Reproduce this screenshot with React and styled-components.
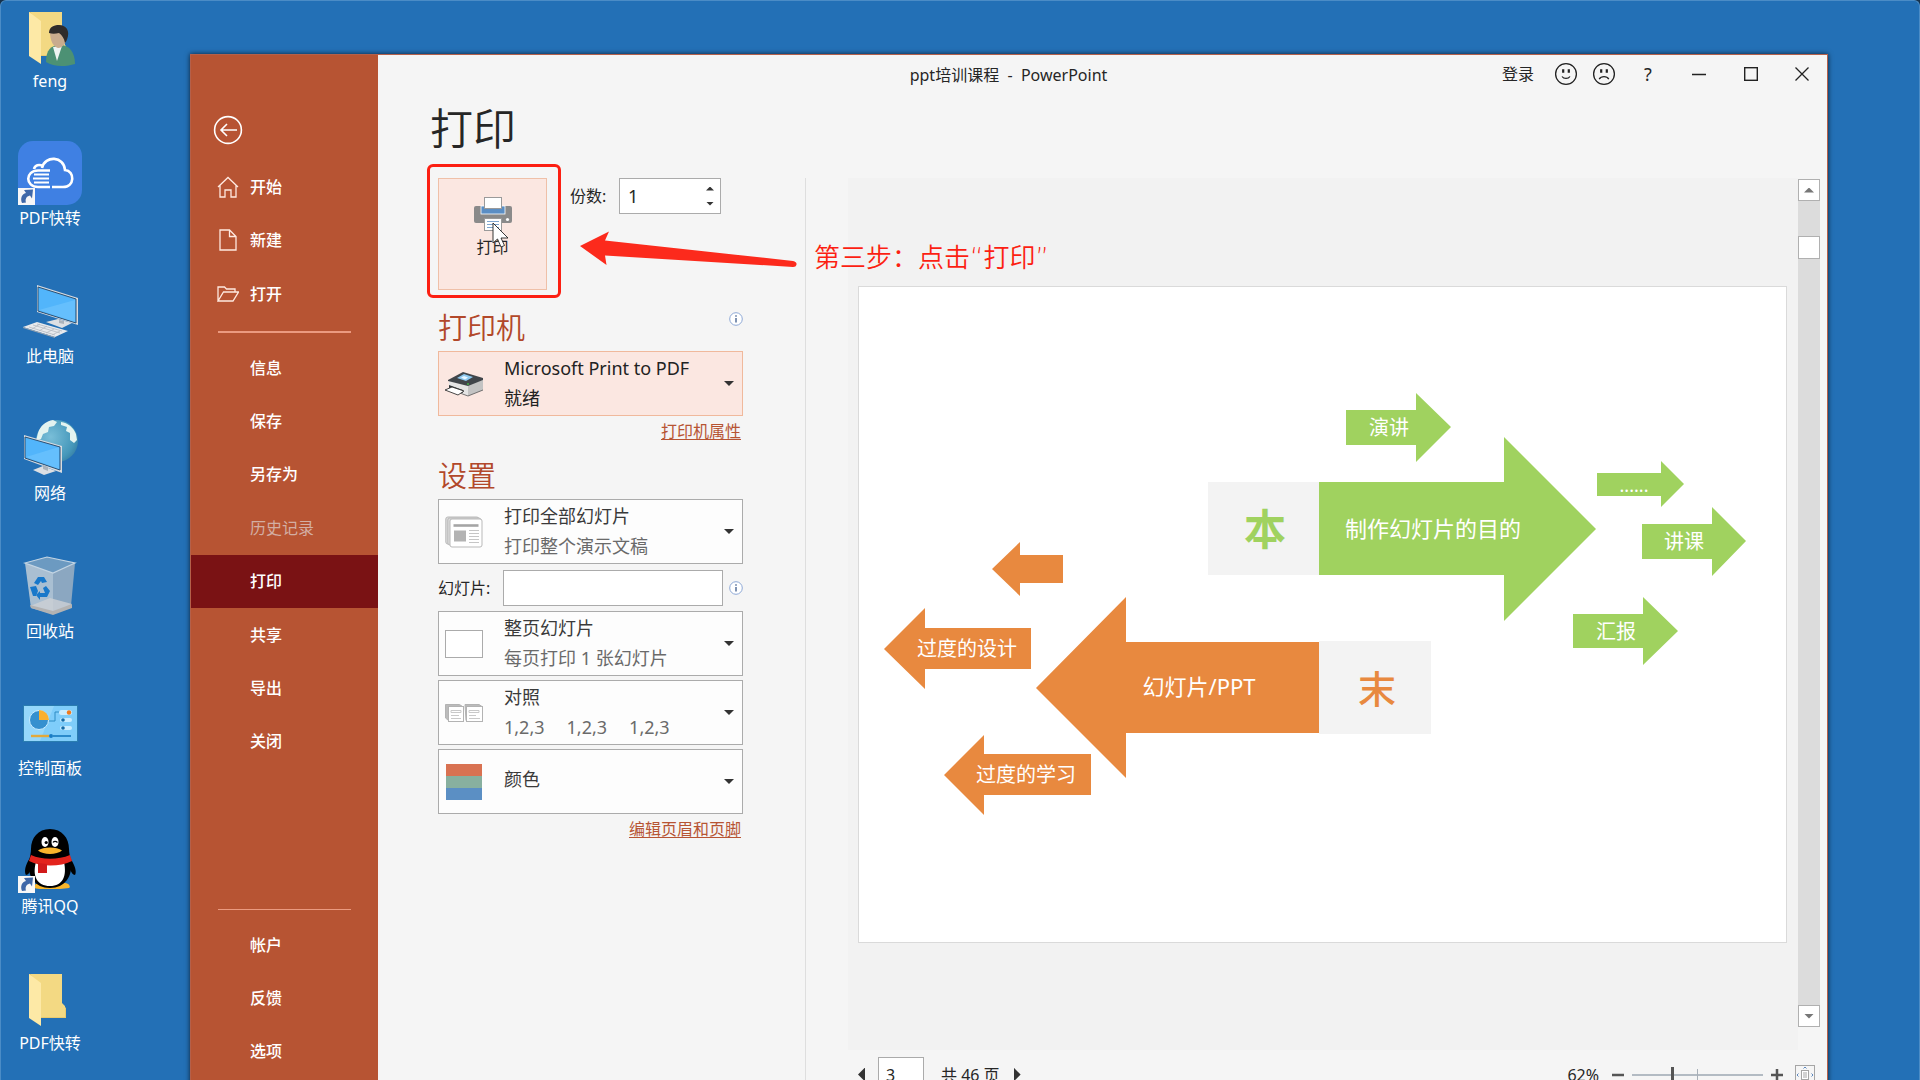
import { useState } from "react";
import styled, { createGlobalStyle } from "styled-components";

const DESKTOP_ITEMS = [
   { id: "feng", label: "feng", Icon: UserFolderIcon },
   { id: "pdf", label: "PDF快转", Icon: PdfAppIcon },
   { id: "pc", label: "此电脑", Icon: ComputerIcon },
   { id: "network", label: "网络", Icon: NetworkIcon },
   { id: "bin", label: "回收站", Icon: RecycleBinIcon },
   { id: "control", label: "控制面板", Icon: ControlPanelIcon },
   { id: "qq", label: "腾讯QQ", Icon: PenguinIcon },
   { id: "pdf-folder", label: "PDF快转", Icon: FolderIcon },
];

const TOP_MENU = [
   { label: "开始", Icon: HomeIcon },
   { label: "新建", Icon: NewFileIcon },
   { label: "打开", Icon: OpenFolderIcon },
];

const FILE_MENU = ["信息", "保存", "另存为", "历史记录", "打印", "共享", "导出", "关闭"];
const BOTTOM_MENU = ["帐户", "反馈", "选项"];

const GREEN = "#a0d25f";
const ORANGE = "#e8893f";

// points are in slide pixels, 929 x 657
const SLIDE_ARROWS = [
   { color: GREEN, points: "488,124 558,124 558,107 593,141 558,176 558,159 488,159", text: "演讲", x: 531, y: 149, size: 20 },
   { color: GREEN, points: "461,196 646,196 646,151 738,243 646,335 646,289 461,289", text: "制作幻灯片的目的", x: 575, y: 251, size: 22 },
   { color: GREEN, points: "739,187 803,187 803,175 826,198 803,221 803,210 739,210", text: "......", x: 776, y: 206, size: 18 },
   { color: GREEN, points: "784,238 854,238 854,221 888,255 854,290 854,273 784,273", text: "讲课", x: 826, y: 263, size: 20 },
   { color: GREEN, points: "715,328 785,328 785,311 820,345 785,379 785,362 715,362", text: "汇报", x: 758, y: 353, size: 20 },
   { color: ORANGE, points: "205,269 162,269 162,256 134,283 162,310 162,297 205,297" },
   { color: ORANGE, points: "173,342 67,342 67,322 26,363 67,403 67,383 173,383", text: "过度的设计", x: 109, y: 370, size: 20 },
   { color: ORANGE, points: "461,356 268,356 268,311 178,402 268,492 268,447 461,447", text: "幻灯片/PPT", x: 341, y: 409, size: 22 },
   { color: ORANGE, points: "233,468 126,468 126,449 86,489 126,529 126,509 233,509", text: "过度的学习", x: 168, y: 496, size: 20 },
];

const App = () => {
   return (
      <>
         <GlobalStyle />
         <Desktop>
            <DesktopIconList>
               {DESKTOP_ITEMS.map(({ id, label, Icon }) => (
                  <li key={id}>
                     <DesktopShortcut>
                        <Icon />
                        <span>{label}</span>
                     </DesktopShortcut>
                  </li>
               ))}
            </DesktopIconList>
            <AppWindow>
               <Sidebar />
               <Backstage>
                  <TitleBar>
                     <WindowTitle>ppt培训课程&nbsp; -&nbsp; PowerPoint</WindowTitle>
                     <WindowControls />
                  </TitleBar>
                  <PageTitle>打印</PageTitle>
                  <BackstageBody>
                     <PrintSettings />
                     <PrintPreview />
                  </BackstageBody>
               </Backstage>
            </AppWindow>
         </Desktop>
      </>
   );
};

const Sidebar = () => {
   return (
      <SidebarWrapper>
         <BackButton aria-label="返回">
            <svg width="30" height="30" viewBox="0 0 30 30" fill="none" stroke="#fff" strokeWidth="1.6">
               <circle cx="15" cy="15" r="13.4" />
               <path d="M24 15H8M14 9l-6 6 6 6" />
            </svg>
         </BackButton>
         <MenuGroup $height={161}>
            {TOP_MENU.map(({ label, Icon }) => (
               <MenuItem key={label}>
                  <Icon />
                  {label}
               </MenuItem>
            ))}
         </MenuGroup>
         <MenuDivider $thickness={2} />
         <MenuGroup $height={427}>
            {FILE_MENU.map((label) => (
               <MenuItem key={label} $indent $active={label === "打印"} disabled={label === "历史记录"}>
                  {label}
               </MenuItem>
            ))}
         </MenuGroup>
         <MenuSpacer />
         <MenuDivider $thickness={1} />
         <MenuGroup $height={160}>
            {BOTTOM_MENU.map((label) => (
               <MenuItem key={label} $indent>{label}</MenuItem>
            ))}
         </MenuGroup>
      </SidebarWrapper>
   );
};

const WindowControls = () => {
   return (
      <ControlList>
         <LoginButton>登录</LoginButton>
         <ControlButton $width={38} aria-label="微笑">
            <svg width="24" height="24" viewBox="0 0 24 24" fill="none" stroke="#222" strokeWidth="1.3">
               <circle cx="12" cy="12" r="10.4" />
               <path d="M8 14.5c1.8 2.6 6.2 2.6 8 0" />
               <path d="M9.2 7.2v3.6M14.8 7.2v3.6" strokeWidth="2.2" />
            </svg>
         </ControlButton>
         <ControlButton $width={38} aria-label="难过">
            <svg width="24" height="24" viewBox="0 0 24 24" fill="none" stroke="#222" strokeWidth="1.3">
               <circle cx="12" cy="12" r="10.4" />
               <path d="M7.2 17.2c2-3.4 7.6-3.4 9.6 0" />
               <path d="M9.2 7.2v3.6M14.8 7.2v3.6" strokeWidth="2.2" />
            </svg>
         </ControlButton>
         <ControlButton $width={50}>?</ControlButton>
         <ControlButton $width={52} aria-label="最小化">
            <svg width="14" height="14" viewBox="0 0 14 14" stroke="#222" strokeWidth="1.5">
               <path d="M0 7.5h14" />
            </svg>
         </ControlButton>
         <ControlButton $width={52} aria-label="最大化">
            <svg width="14" height="14" viewBox="0 0 14 14" fill="none" stroke="#222" strokeWidth="1.4">
               <rect x=".7" y=".7" width="12.6" height="12.6" />
            </svg>
         </ControlButton>
         <ControlButton $width={50} aria-label="关闭窗口">
            <svg width="14" height="14" viewBox="0 0 14 14" stroke="#222" strokeWidth="1.3">
               <path d="M.5.5l13 13M13.5.5l-13 13" />
            </svg>
         </ControlButton>
      </ControlList>
   );
};

const PrintSettings = () => {
   const [copies, setCopies] = useState(1);

   return (
      <SettingsColumn>
         <PrintRow>
            <PrintButtonWrapper>
               <PrintButton>
                  <PrinterGlyph />
                  打印
               </PrintButton>
               <Highlight />
               <CursorIcon />
            </PrintButtonWrapper>
            <CopiesField>
               <label htmlFor="copies">份数:</label>
               <CopiesBox>
                  <input
                     id="copies"
                     type="number"
                     value={copies}
                     onChange={(e) => setCopies(Number(e.target.value))}
                  />
                  <SpinButtons>
                     <button aria-label="增加" onClick={() => setCopies(copies + 1)}>
                        <Triangle $dir="up" $size={4} />
                     </button>
                     <button aria-label="减少" onClick={() => setCopies(Math.max(1, copies - 1))}>
                        <Triangle $dir="down" $size={4} />
                     </button>
                  </SpinButtons>
               </CopiesBox>
            </CopiesField>
            <StepNote>
               <svg width="218" height="36" viewBox="0 0 218 36" fill="#fc2a1c">
                  <path d="M0 15L29 0.5L25 9.5L213 30Q217 31 216.500 33.500Q216 36 213 36L25 24.500L26.500 34Z" />
               </svg>
               <span>第三步：点击“打印”</span>
            </StepNote>
         </PrintRow>

         <SectionHead>
            <h2>打印机</h2>
            <InfoIcon />
         </SectionHead>
         <OptionSelect
            highlighted
            name="选择打印机"
            title="Microsoft Print to PDF"
            detail="就绪"
            icon={<PrinterPhotoIcon />}
         />
         <SettingsLink href="#printer">打印机属性</SettingsLink>

         <SectionHead>
            <h2>设置</h2>
         </SectionHead>
         <OptionSelect name="打印范围" title="打印全部幻灯片" detail="打印整个演示文稿" icon={<SlidesStackIcon />} />
         <SlidesField>
            <label htmlFor="slides">幻灯片:</label>
            <input id="slides" type="text" />
            <InfoIcon />
         </SlidesField>
         <OptionStack>
            <OptionSelect name="版式" title="整页幻灯片" detail="每页打印 1 张幻灯片" icon={<FullPageIcon />} />
            <OptionSelect
               name="顺序"
               title="对照"
               detail={<><i>1,2,3</i><i>1,2,3</i><i>1,2,3</i></>}
               icon={<CollateIcon />}
            />
            <OptionSelect name="颜色模式" title="颜色" icon={<ColorIcon />} />
         </OptionStack>
         <SettingsLink href="#header-footer">编辑页眉和页脚</SettingsLink>
      </SettingsColumn>
   );
};

const OptionSelect = ({ name, title, detail, icon, highlighted = false }) => {
   return (
      <OptionBox $highlighted={highlighted}>
         <OptionIcon>{icon}</OptionIcon>
         <OptionText $highlighted={highlighted} $single={!detail}>
            <strong>{title}</strong>
            {detail && <span>{detail}</span>}
         </OptionText>
         <Triangle $dir="down" $size={5} />
         <select aria-label={name} defaultValue={title}>
            <option>{title}</option>
         </select>
      </OptionBox>
   );
};

const PrintPreview = () => {
   return (
      <PreviewColumn>
         <PreviewMain>
            <PreviewStage>
               <Slide />
            </PreviewStage>
            <ScrollBar>
               <button aria-label="向上滚动"><Triangle $dir="up" $size={5} $color="#777" /></button>
               <ScrollThumb />
               <ScrollTrack />
               <button aria-label="向下滚动"><Triangle $dir="down" $size={5} $color="#777" /></button>
            </ScrollBar>
         </PreviewMain>
         <PreviewFooter>
            <Pager>
               <button aria-label="上一页"><Triangle $dir="left" $size={7} /></button>
               <input type="text" aria-label="当前页" defaultValue="3" />
               <span>共 46 页</span>
               <button aria-label="下一页"><Triangle $dir="right" $size={7} /></button>
            </Pager>
            <Zoomer>
               <label htmlFor="zoom">62%</label>
               <button aria-label="缩小">
                  <svg width="12" height="12" viewBox="0 0 12 12" stroke="#555" strokeWidth="2.5"><path d="M0 6h12" /></svg>
               </button>
               <ZoomSlider>
                  <input id="zoom" type="range" min="10" max="180" defaultValue="62" />
               </ZoomSlider>
               <button aria-label="放大">
                  <svg width="12" height="12" viewBox="0 0 12 12" stroke="#555" strokeWidth="2.5"><path d="M0 6h12M6 0v12" /></svg>
               </button>
               <button aria-label="缩放到页面">
                  <svg width="20" height="20" viewBox="0 0 20 20" fill="none" stroke="#a5a5a5">
                     <rect x=".5" y=".5" width="19" height="19" />
                     <rect x="6.500" y="5.500" width="7" height="9" fill="#fff" />
                     <path d="M8 8h4M8 10h4M8 12h4" />
                     <path d="M8.500 3.500L10 2l1.500 1.500M8.500 16.500L10 18l1.500-1.500M3.500 8.500L2 10l1.500 1.500M16.500 8.500L18 10l-1.500 1.500" stroke="#5b87bd" />
                  </svg>
               </button>
            </Zoomer>
         </PreviewFooter>
      </PreviewColumn>
   );
};

const Slide = () => {
   return (
      <SlidePaper viewBox="0 0 929 657">
         <rect width="929" height="657" fill="#fff" />
         <rect x="350" y="196" width="111" height="93" fill="#f3f3f3" />
         <rect x="461" y="355" width="112" height="93" fill="#f3f3f3" />
         {SLIDE_ARROWS.map(({ color, points, text, x, y, size }) => (
            <g key={points}>
               <polygon points={points} fill={color} />
               {text && <text x={x} y={y} fontSize={size} fill="#fff">{text}</text>}
            </g>
         ))}
         <text x="407" y="259" fontSize="42" fontWeight="700" fill={GREEN}>本</text>
         <text x="519" y="417" fontSize="38" fontWeight="500" fill={ORANGE}>末</text>
         <rect x=".5" y=".5" width="928" height="656" fill="none" stroke="#dadada" />
      </SlidePaper>
   );
};

/* desktop icons */

function FolderShape() {
   return (
      <>
         <path d="M11 8h33v30l4 4v10H11z" fill="#e9ca6e" />
         <path d="M13 8h31v29l3 3v11H22z" fill="#f3d983" />
         <path d="M11 8l12 9v43L11 52z" fill="#fde9a6" />
      </>
   );
}

function FolderIcon() {
   return (
      <svg width="64" height="64" viewBox="0 0 64 64">
         <FolderShape />
      </svg>
   );
}

function UserFolderIcon() {
   return (
      <svg width="64" height="64" viewBox="0 0 64 64">
         <FolderShape />
         <path d="M28 58c0-12 5-17 14-17 10 0 15 8 15 19-9 3-22 3-29-2z" fill="#4c9174" />
         <path d="M35 43l4 14 5-15z" fill="#eef4f2" />
         <path d="M32 28c0-5 4-7 8-7 6 0 9 4 9 10 0 7-4 13-9 13-5-1-8-8-8-16z" fill="#c9ac8e" />
         <path d="M31 29c0-6 5-8 10-8 7 0 10 5 9 11-1 4-2 6-3 7-1-5-3-8-6-10-4 1-7 1-10 0z" fill="#2f2c2b" />
      </svg>
   );
}

function ShortcutBadge() {
   return (
      <>
         <rect x="0" y="47" width="17" height="17" fill="#f7f7f7" />
         <path d="M4 62c-2-5 0-9 4-10l-2-3 9-.5-1 9-2-3c-4 1-5 4-4 7z" fill="#3f68a8" />
      </>
   );
}

function PdfAppIcon() {
   return (
      <svg width="64" height="64" viewBox="0 0 64 64">
         <rect width="64" height="64" rx="15" fill="#3f80e3" />
         <g fill="none" stroke="#fff" strokeWidth="2.6">
            <path d="M32 29.500H20C7 29.500 7 46 20 46h12" />
            <path d="M34 46h11c12 0 12-16 2-17-1-14-20-15-23-2" />
            <path d="M16 28c1-4 5-5 9-3" />
            <path d="M16 33.500h15M15 37.500h16M16 41.500h15" strokeWidth="1.8" />
         </g>
         <ShortcutBadge />
      </svg>
   );
}

function ComputerIcon() {
   return (
      <svg width="64" height="64" viewBox="0 0 64 64">
         <path d="M19 6l41 13v27L19 33z" fill="#d7dbe0" />
         <path d="M20 8l38 12v24L20 32z" fill="#52b5fb" stroke="#2b4f72" strokeWidth="1" />
         <path d="M21 31l36-10v22z" fill="#7ccbff" opacity=".45" />
         <path d="M28 43l12-3 14 4-10 5z" fill="#dcdfe3" />
         <path d="M41 41l5 1v3l-5-1z" fill="#aab2bb" />
         <path d="M5 48l14-5 31 9-13 6z" fill="#e8eaed" />
         <path d="M5 48l32 10v1L5 49z" fill="#9aa4af" />
         <path d="M11 48l26 8M15 46l27 8M19 45l25 7M14 50l8-5M21 52l8-5M28 54l8-4M34 56l8-4" stroke="#b4bac1" strokeWidth=".8" />
      </svg>
   );
}

function NetworkIcon() {
   return (
      <svg width="64" height="64" viewBox="0 0 64 64">
         <defs>
            <radialGradient id="globe" cx=".35" cy=".4" r=".8">
               <stop offset="0" stopColor="#79bed8" />
               <stop offset=".7" stopColor="#4597ba" />
               <stop offset="1" stopColor="#2f7298" />
            </radialGradient>
         </defs>
         <circle cx="39" cy="25" r="21" fill="url(#globe)" />
         <path d="M20 17c2-7 8-12 15-13l4 2-3 4-5 1-1 5-5 2-2 5-5 2zM43 6c7 1 12 5 15 12l1 6-3 3-4-3v-7l-4-2 1-4-6-2z" fill="#e3f3f0" />
         <path d="M6 19l38 11v27L6 43z" fill="#d7dbe0" />
         <path d="M7 21l35 10v23L7 42z" fill="#52b5fb" stroke="#2b4f72" strokeWidth="1" />
         <path d="M8 41l33-10v22z" fill="#7ccbff" opacity=".45" />
         <path d="M15 54l10-4 13 5-12 4z" fill="#dcdfe3" />
         <path d="M25 49l5 2v4l-5-2z" fill="#aab2bb" />
      </svg>
   );
}

function RecycleBinIcon() {
   return (
      <svg width="64" height="64" viewBox="0 2 64 64">
         <path d="M7 11l28 6v45l-22-6z" fill="#a9bfd2" />
         <path d="M57 11l-22 6v45l18-8z" fill="#8ba7c1" />
         <path d="M7 11l22-6 28 6-22 10z" fill="#6c9ac1" stroke="#c3d5e4" strokeWidth="1.200" />
         <path d="M12 54l20-8 22 6-19 10z" fill="#cdd1d4" opacity=".8" />
         <path d="M12 53l23 6 19-7v4l-19 7-22-7z" fill="#b3b3b3" />
         <g fill="#1878ca">
            <path d="M16 31l4-6h6l3 5-5 1-1-2-3 4z" />
            <path d="M12 35l6-1 2 5-2 5h-3z" />
            <path d="M28 34l4 5-3 6h-7v3l-4-5 4-4v2h5l-2-5z" />
         </g>
      </svg>
   );
}

function ControlPanelIcon() {
   return (
      <svg width="64" height="64" viewBox="0 1 64 64">
         <rect x="5.500" y="15.500" width="54" height="36" fill="#7fcdfa" stroke="#2a7db0" />
         <path d="M6 16h30L22 51H6z" fill="#a3ddfc" opacity=".6" />
         <circle cx="21" cy="30" r="9.500" fill="#3590cf" stroke="#c9ecff" strokeWidth="1" />
         <path d="M21 30V20a10 10 0 0 1 10 10z" fill="#fbb030" />
         <path d="M31 31h6v-9h6" fill="none" stroke="#2f8cc4" />
         <rect x="41" y="20" width="13" height="5" rx="2.500" fill="#c9ecff" />
         <circle cx="51" cy="22.500" r="2.200" fill="#ef7a1f" />
         <rect x="42" y="28" width="12" height="4" rx="2" fill="#c9ecff" />
         <circle cx="45" cy="30" r="1.800" fill="#146ba8" />
         <rect x="42" y="36" width="12" height="4" rx="2" fill="#c9ecff" />
         <circle cx="45" cy="38" r="1.800" fill="#146ba8" />
         <path d="M13 46h18" stroke="#e2a93c" strokeWidth="2.400" />
         <path d="M35 46h18" stroke="#2a8acb" strokeWidth="2" />
         <circle cx="33" cy="46" r="2" fill="#1a7cc4" />
      </svg>
   );
}

function PenguinIcon() {
   return (
      <svg width="64" height="64" viewBox="0 0 64 64">
         <g transform="translate(0 -3)">
            <path d="M18 58c-3 2-3 5 4 5h10c6 0 14 0 19-1 2-1 0-5-4-5z" fill="#f7b52b" />
            <path d="M12 32c-5 7-6 14-4 17 2 0 4-3 5-6zM52 32c5 7 7 14 5 17-2 0-4-3-5-6z" fill="#000" />
            <path d="M32 3c12 0 19 9 19 20 0 4 1 7 2 12 2 15-6 27-21 27S9 50 11 35c1-5 2-8 2-12C13 12 20 3 32 3z" fill="#000" />
            <path d="M18 36c8 3 20 3 28 0 3 14-1 24-14 24S14 50 18 36z" fill="#fff" />
            <path d="M13 29c11 5 27 5 39 0l2 6c-12 6-31 6-43 0z" fill="#e3231c" />
            <path d="M20 37l9 1v9h-9z" fill="#d11a1a" />
            <ellipse cx="27" cy="16" rx="3.500" ry="5" fill="#fff" />
            <ellipse cx="37" cy="16" rx="3.500" ry="5" fill="#fff" />
            <circle cx="28.200" cy="16.500" r="1.600" fill="#000" />
            <path d="M35 16.500c1-1.600 3-1.600 4.500 0" fill="none" stroke="#000" strokeWidth="1.200" />
            <path d="M20 24.500c5-4 19-4 24 0-5 4.500-19 4.500-24 0z" fill="#f9b32c" />
         </g>
         <ShortcutBadge />
      </svg>
   );
}

/* sidebar icons */

function HomeIcon() {
   return (
      <svg width="22" height="22" viewBox="0 0 22 22" fill="none" stroke="#ffe9e0" strokeWidth="1.300">
         <path d="M1 11L11 1.500 21 11M3 9.500V21h5v-7h6v7h5V9.500" />
      </svg>
   );
}

function NewFileIcon() {
   return (
      <svg width="22" height="22" viewBox="0 0 22 22" fill="none" stroke="#ffe9e0" strokeWidth="1.300">
         <path d="M3 1h9.500L19 7.500V21H3zM12.500 1v6.500H19" />
      </svg>
   );
}

function OpenFolderIcon() {
   return (
      <svg width="22" height="22" viewBox="0 0 22 22" fill="none" stroke="#ffe9e0" strokeWidth="1.300">
         <path d="M1 18V4h6.500l2 2H18v3M1 18l5.500-9H21.500L16 18z" />
      </svg>
   );
}

/* print page icons */

function PrinterGlyph() {
   return (
      <svg width="38" height="34" viewBox="0 0 38 34">
         <rect x="0" y="9" width="38" height="17" rx="2" fill="#8a8a8a" />
         <rect x="7" y="9" width="24" height="8" fill="#5b8ec4" stroke="#fff" strokeWidth=".8" />
         <rect x="10.500" y=".5" width="17" height="11" fill="#fff" stroke="#9a9a9a" />
         <circle cx="33.500" cy="22.500" r="1.600" fill="#fff" />
         <rect x="10.500" y="21.500" width="17" height="12" fill="#fff" stroke="#9a9a9a" />
         <path d="M13 24.500h12M13 27.500h12M13 30.500h12" stroke="#7fa5cf" />
      </svg>
   );
}

function CursorIcon() {
   return (
      <CursorSvg width="18" height="26" viewBox="0 0 18 26">
         <path d="M1 1v20l4.500-4 3.500 8 3.500-1.500-3.500-7.500h7z" fill="#fff" stroke="#222" strokeWidth=".9" />
      </CursorSvg>
   );
}

function InfoIcon() {
   return (
      <svg width="14" height="14" viewBox="0 0 14 14" fill="none">
         <circle cx="7" cy="7" r="6.300" fill="#fff" stroke="#8ea9d6" />
         <path d="M7 6v4.500M7 3.300v1.500" stroke="#56709b" strokeWidth="1.500" />
      </svg>
   );
}

function PrinterPhotoIcon() {
   return (
      <svg width="38" height="26" viewBox="0 0 38 26">
         <path d="M4 10v8l19 7 15-6V9L22 14z" fill="#e4e4e4" />
         <path d="M23 14l15-5v10l-15 6z" fill="#c3c3c3" />
         <path d="M3 9L18 1l20 6v2l-15 6L3 10z" fill="#40454a" />
         <path d="M12 7l7-4 9 3-7 4z" fill="#8ec9f0" />
         <path d="M16 6.500l3-1.500 4 1.500-3 2z" fill="#e8f6ff" />
         <path d="M4 14l14 5v3L4 17z" fill="#2e3236" />
         <path d="M4 18l19 7 15-6" fill="none" stroke="#555" strokeWidth=".8" />
         <path d="M0 19l7-3 12 4-6 4z" fill="#fff" stroke="#333" strokeWidth=".9" />
         <circle cx="23" cy="13" r="1" fill="#3fae49" />
      </svg>
   );
}

function SlidesStackIcon() {
   return (
      <svg width="38" height="32" viewBox="0 0 38 32" fill="#f1f1f1" stroke="#b9b9b9">
         <rect x=".8" y="1" width="33" height="27" rx="2" fill="#ddd" />
         <rect x="2.800" y="2" width="33" height="27" rx="2" fill="#ddd" />
         <rect x="5" y="3" width="32" height="28" rx="2" fill="#fff" />
         <path d="M8.500 9.500h25" stroke="#a5a5a5" strokeWidth="2.600" />
         <path d="M9 14.500h12v11H9z" fill="#b3b3b3" stroke="none" />
         <path d="M24 14.500h10M24 17.500h10M24 20.500h10M24 23.500h10M24 26.500h10" stroke="#c6c6c6" />
      </svg>
   );
}

function FullPageIcon() {
   return (
      <svg width="38" height="28" viewBox="0 0 38 28">
         <rect x=".5" y=".5" width="37" height="27" fill="#fff" stroke="#ababab" />
      </svg>
   );
}

function CollateIcon() {
   return (
      <svg width="38" height="18" viewBox="0 0 38 18" fill="#fff" stroke="#b3b3b3">
         <path d="M.5 .5h14l3 2v14H3.500L.5 14z" fill="#bbb" />
         <path d="M20 .5h14l3 2v14H21z" fill="#bbb" />
         <rect x="3.500" y="2.500" width="15" height="15" />
         <rect x="21.500" y="2.500" width="16" height="15" />
         <path d="M6 6.500h10v2H6zM6 11.500h8M6 14.500h10M24 6.500h10v2H24zM24 11.500h7M24 14.500h11" stroke="#c9c9c9" />
      </svg>
   );
}

function ColorIcon() {
   return (
      <svg width="38" height="36" viewBox="0 0 38 36">
         <rect x="1" width="36" height="12" fill="#d97252" />
         <rect x="1" y="12" width="36" height="12" fill="#88b09f" />
         <rect x="1" y="24" width="36" height="12" fill="#5b8fc4" />
      </svg>
   );
}

const GlobalStyle = createGlobalStyle`
  * {
    box-sizing: border-box;
  }

  body {
    margin: 0;
    background: #16324c;
    color: #262626;
    font-family: "Noto Sans", "Noto Sans CJK SC", sans-serif;
    font-size: 16px;
    line-height: 24px;
  }

  button, input, select {
    margin: 0;
    padding: 0;
    border: 0;
    border-radius: 0;
    background: none;
    color: inherit;
    font: inherit;
    outline: none;
  }

  svg {
    display: block;
    flex: none;
  }

  h1, h2, ul {
    margin: 0;
    padding: 0;
    list-style: none;
  }

  h1, h2 {
    font-weight: 350;
  }
`;

const Desktop = styled.div`
  display: flex;
  height: 100vh;
  overflow: hidden;
  background: #2370b6;
  border: 1px solid #4b8cc6;
  border-bottom: 0;
  border-radius: 6px 6px 0 0;
`;

const DesktopIconList = styled.ul`
  display: flex;
  flex-direction: column;
  justify-content: space-between;
  width: 189px;
  padding: 3px 0 25px;
  flex: none;
`;

const DesktopShortcut = styled.button`
  display: flex;
  flex-direction: column;
  align-items: center;
  gap: 1px;
  width: 98px;
  color: #fff;
`;

const AppWindow = styled.div`
  display: flex;
  flex: 1;
  min-width: 0;
  height: calc(100vh - 34px);
  margin: 53px 91px 0 0;
  background: #f5f5f5;
  border: 1px solid #b5604a;
  box-shadow: 0 0 5px rgba(0, 0, 0, 0.7);
`;

const SidebarWrapper = styled.nav`
  display: flex;
  flex-direction: column;
  width: 187px;
  padding-bottom: 21px;
  background: #b75433;
  flex: none;
`;

const BackButton = styled.button`
  width: 30px;
  height: 30px;
  margin: 60px 0 15px 22px;
  flex: none;
`;

const MenuGroup = styled.div`
  display: grid;
  grid-auto-rows: 1fr;
  height: ${({ $height }) => $height}px;
  flex: none;
`;

const MenuItem = styled.button`
  display: flex;
  align-items: center;
  gap: 11px;
  padding-left: ${({ $indent }) => ($indent ? 59 : 26)}px;
  background: ${({ $active }) => ($active ? "#7a1214" : "transparent")};
  color: #fff;
  font-weight: 500;

  &:disabled {
    color: #d3aea3;
    font-weight: 400;
  }
`;

const MenuDivider = styled.div`
  height: ${({ $thickness }) => $thickness}px;
  margin: 10px 27px 8px;
  background: #eb9a80;
  flex: none;
`;

const MenuSpacer = styled.div`
  flex: 1;
`;

const Backstage = styled.main`
  display: flex;
  flex-direction: column;
  flex: 1;
  min-width: 0;
`;

const TitleBar = styled.header`
  position: relative;
  display: flex;
  justify-content: flex-end;
  align-items: center;
  height: 40px;
  flex: none;
`;

/* centred on the whole window, sidebar included */
const WindowTitle = styled.div`
  position: absolute;
  left: -188px;
  right: 0;
  text-align: center;
  pointer-events: none;
`;

const ControlList = styled.div`
  display: flex;
  align-items: center;
  padding-bottom: 2px;
`;

const ControlButton = styled.button`
  display: flex;
  align-items: center;
  justify-content: center;
  width: ${({ $width }) => $width}px;
  height: 36px;
  font-size: 18px;
`;

const LoginButton = styled.button`
  padding-right: 13px;
`;

const PageTitle = styled.h1`
  margin-bottom: 15px;
  padding-left: 52px;
  font-size: 43px;
  line-height: 68px;
`;

const BackstageBody = styled.div`
  display: flex;
  flex: 1;
  min-height: 0;
`;

const SettingsColumn = styled.section`
  display: flex;
  flex-direction: column;
  width: 428px;
  padding: 0 62px 0 60px;
  border-right: 1px solid #dedede;
  flex: none;
`;

const PrintRow = styled.div`
  position: relative;
  display: flex;
  gap: 23px;
`;

const PrintButtonWrapper = styled.div`
  position: relative;
`;

const PrintButton = styled.button`
  display: flex;
  flex-direction: column;
  align-items: center;
  gap: 4px;
  width: 109px;
  height: 112px;
  padding-top: 18px;
  background: #fbe7e1;
  border: 1px solid #efc0a8;
`;

const Highlight = styled.div`
  position: absolute;
  inset: -14px -14px -8px -11px;
  border: 3px solid #fc1f12;
  border-radius: 6px;
  pointer-events: none;
`;

const CursorSvg = styled.svg`
  position: absolute;
  left: 54px;
  top: 44px;
  pointer-events: none;
`;

const CopiesField = styled.div`
  display: flex;
  align-items: center;
  justify-content: space-between;
  width: 151px;
  height: 36px;
`;

const CopiesBox = styled.div`
  display: flex;
  width: 102px;
  height: 36px;
  background: #fff;
  border: 1px solid #ababab;

  input {
    flex: 1;
    min-width: 0;
    padding-left: 8px;
    font-size: 18px;
    appearance: textfield;
  }

  input::-webkit-inner-spin-button {
    appearance: none;
  }
`;

const SpinButtons = styled.div`
  display: flex;
  flex-direction: column;
  justify-content: center;
  width: 20px;

  button {
    display: flex;
    align-items: center;
    justify-content: center;
    height: 15px;
  }
`;

const TRIANGLE_SHAPES = {
   up: "polygon(50% 0, 100% 100%, 0 100%)",
   down: "polygon(0 0, 100% 0, 50% 100%)",
   left: "polygon(100% 0, 100% 100%, 0 50%)",
   right: "polygon(0 0, 100% 50%, 0 100%)",
};

const Triangle = styled.span`
  width: ${({ $dir, $size }) => ($dir === "up" || $dir === "down" ? $size * 2 : $size)}px;
  height: ${({ $dir, $size }) => ($dir === "up" || $dir === "down" ? $size : $size * 2)}px;
  background: ${({ $color = "#333" }) => $color};
  clip-path: ${({ $dir }) => TRIANGLE_SHAPES[$dir]};
  flex: none;
`;

/* sits over the settings and the preview */
const StepNote = styled.div`
  position: absolute;
  left: 142px;
  top: 53px;
  z-index: 1;
  display: flex;
  align-items: flex-start;
  gap: 16px;
  color: #fc1f12;
  font-family: "DejaVu Sans", "Noto Sans CJK SC", sans-serif;
  font-size: 26px;
  font-weight: 350;
  line-height: 36px;
  white-space: nowrap;
  pointer-events: none;

  span {
    padding-top: 9px;
  }
`;

const SectionHead = styled.div`
  display: flex;
  justify-content: space-between;
  height: 38px;
  margin: 19px 0 4px;

  h2 {
    color: #b2482a;
    font-size: 29px;
    line-height: 38px;
  }

  svg {
    margin-top: 3px;
  }
`;

const OptionBox = styled.div`
  position: relative;
  display: flex;
  align-items: center;
  height: 65px;
  padding: 0 8px 0 6px;
  background: ${({ $highlighted }) => ($highlighted ? "#fbe7e1" : "#fdfdfd")};
  border: 1px solid ${({ $highlighted }) => ($highlighted ? "#f0b99c" : "#ababab")};

  select {
    position: absolute;
    inset: 0;
    width: 100%;
    opacity: 0;
    cursor: pointer;
  }
`;

const OptionIcon = styled.div`
  display: flex;
  align-items: center;
  width: 59px;
`;

const OptionText = styled.div`
  display: flex;
  flex-direction: column;
  flex: 1;
  padding-bottom: ${({ $single }) => ($single ? 6 : 2)}px;
  color: ${({ $highlighted }) => ($highlighted ? "#222" : "#6a6a6a")};
  font-size: 18px;
  line-height: 30px;

  strong {
    color: ${({ $highlighted }) => ($highlighted ? "#222" : "#3a3a3a")};
    font-weight: 400;
  }

  i {
    margin-right: 22px;
    font-style: normal;
  }
`;

const SettingsLink = styled.a`
  align-self: flex-end;
  margin: 3px 2px 0 0;
  color: #b75433;
  text-decoration: underline;
  text-underline-offset: 2px;

  & + ${SectionHead} {
    margin-top: 14px;
  }
`;

const SlidesField = styled.div`
  display: flex;
  align-items: center;
  margin: 6px 0 5px;

  label {
    width: 65px;
  }

  input {
    flex: 1;
    min-width: 0;
    height: 36px;
    margin-right: 6px;
    padding: 0 8px;
    background: #fff;
    border: 1px solid #ababab;
  }
`;

const OptionStack = styled.div`
  display: flex;
  flex-direction: column;
  gap: 4px;
`;

const PreviewColumn = styled.section`
  display: flex;
  flex-direction: column;
  flex: 1;
  min-width: 0;
  margin: 0 7px 0 42px;
`;

const PreviewMain = styled.div`
  display: flex;
  flex: 1;
  min-height: 0;
`;

const PreviewStage = styled.div`
  display: flex;
  align-items: center;
  flex: 1;
  min-width: 0;
  padding: 0 11px 0 10px;
  background: #f2f2f2;
`;

const SlidePaper = styled.svg`
  width: 100%;
  flex: 1;

  text {
    text-anchor: middle;
  }
`;

const ScrollBar = styled.div`
  display: flex;
  flex-direction: column;
  width: 22px;
  margin: 1px 0 23px;
  background: #dcdcdc;

  button {
    display: flex;
    align-items: center;
    justify-content: center;
    height: 22px;
    background: #fff;
    border: 1px solid #b0b0b0;
  }
`;

const ScrollThumb = styled.div`
  height: 23px;
  margin-top: 35px;
  background: #fff;
  border: 1px solid #b0b0b0;
`;

const ScrollTrack = styled.div`
  flex: 1;
`;

const PreviewFooter = styled.footer`
  display: flex;
  justify-content: space-between;
  align-items: center;
  height: 49px;
  padding: 0 5px 0 10px;
  flex: none;
`;

const Pager = styled.div`
  display: flex;
  align-items: center;

  button {
    display: flex;
  }

  input {
    width: 46px;
    height: 36px;
    margin: 0 17px 0 13px;
    padding-left: 7px;
    background: #fff;
    border: 1px solid #ababab;
  }

  span {
    margin-right: 14px;
  }

  button span {
    margin-right: 0;
  }
`;

const Zoomer = styled.div`
  display: flex;
  align-items: center;
  gap: 8px;

  label {
    margin-right: 5px;
  }

  button:last-child {
    margin-left: 4px;
  }
`;

const ZoomSlider = styled.div`
  display: flex;
  align-items: center;
  width: 131px;
  height: 20px;
  background:
    linear-gradient(#a8b0b8, #a8b0b8) center / 1px 12px no-repeat,
    linear-gradient(#b3bbc3, #b3bbc3) center / 100% 2px no-repeat;

  input {
    width: 100%;
    height: 20px;
    appearance: none;
  }

  input::-webkit-slider-thumb {
    width: 3px;
    height: 16px;
    background: #555;
    appearance: none;
  }
`;

export default App;
